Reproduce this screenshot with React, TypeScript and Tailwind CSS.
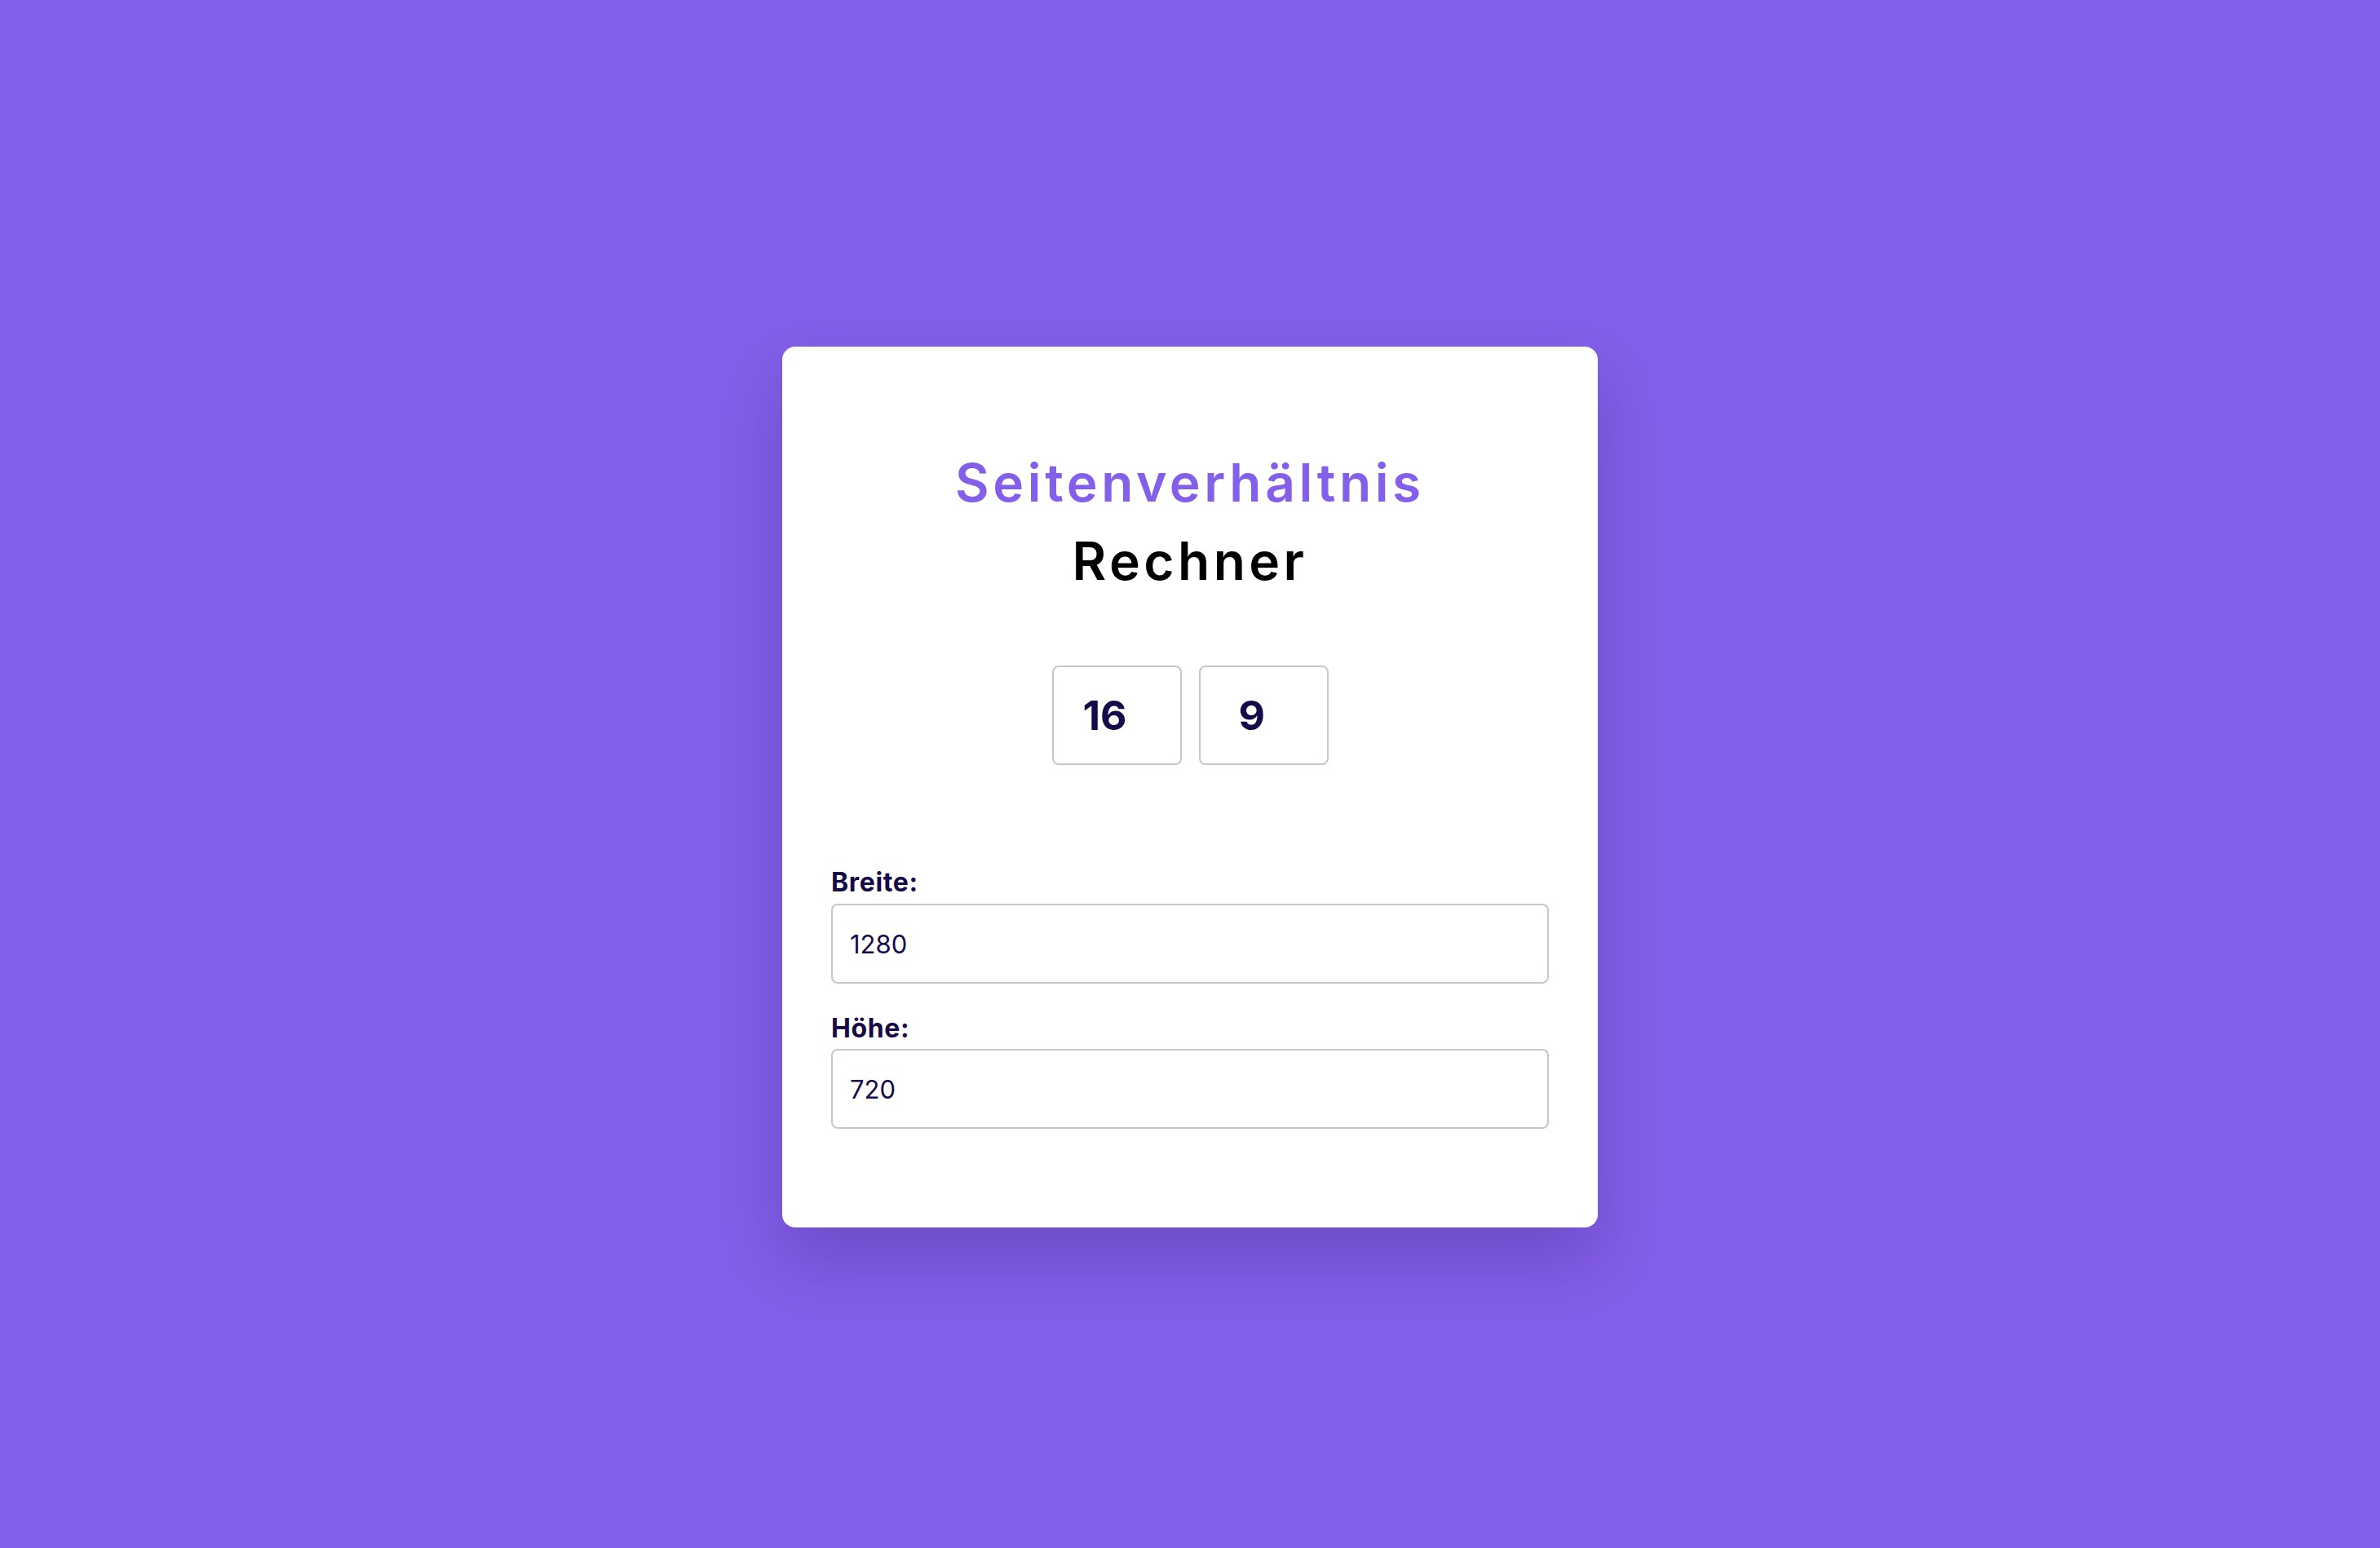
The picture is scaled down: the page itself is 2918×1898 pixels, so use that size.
export default function App() {
  return (
    <div
      className="min-h-screen w-full bg-[#845fe9] flex justify-center pt-[425px]"
      style={{ fontFamily: 'Inter, "Open Sans", sans-serif' }}
    >
      <div className="w-[1000px] h-[1080px] bg-white rounded-[16px] px-[60px] pt-[119px] shadow-[0_40px_80px_rgba(30,10,80,0.22)]">
        <h1 className="text-center text-[64px] leading-[96px] font-semibold">
          <span className="block text-[#845fe9] tracking-[0.072em]">Seitenverhältnis</span>
          <span className="block text-black tracking-[0.07em]">Rechner</span>
        </h1>

        <div className="mt-[80px] flex justify-center gap-[21px]">
          <input
            defaultValue="16"
            className="w-[159px] h-[122px] rounded-[8px] border-2 border-[#c4c7cd] pl-[36px] text-[50px] font-bold text-[#170a48] outline-none"
          />
          <input
            defaultValue="9"
            className="w-[159px] h-[122px] rounded-[8px] border-2 border-[#c4c7cd] pl-[47px] text-[50px] font-bold text-[#170a48] outline-none"
          />
        </div>

        <div className="mt-[120px] flex flex-col">
          <label className="text-[32px] leading-[48px] font-bold tracking-[0.02em] text-[#170a48]">Breite:</label>
          <input
            defaultValue="1280"
            className="mt-[2px] h-[98px] w-full rounded-[8px] border-2 border-[#c4c7cd] px-[21px] text-[31px] text-[#170a48] outline-none"
          />
          <label className="mt-[31px] text-[32px] leading-[48px] font-bold tracking-[0.02em] text-[#170a48]">Höhe:</label>
          <input
            defaultValue="720"
            className="mt-[1px] h-[98px] w-full rounded-[8px] border-2 border-[#c4c7cd] px-[21px] text-[31px] text-[#170a48] outline-none"
          />
        </div>
      </div>
    </div>
  );
}
